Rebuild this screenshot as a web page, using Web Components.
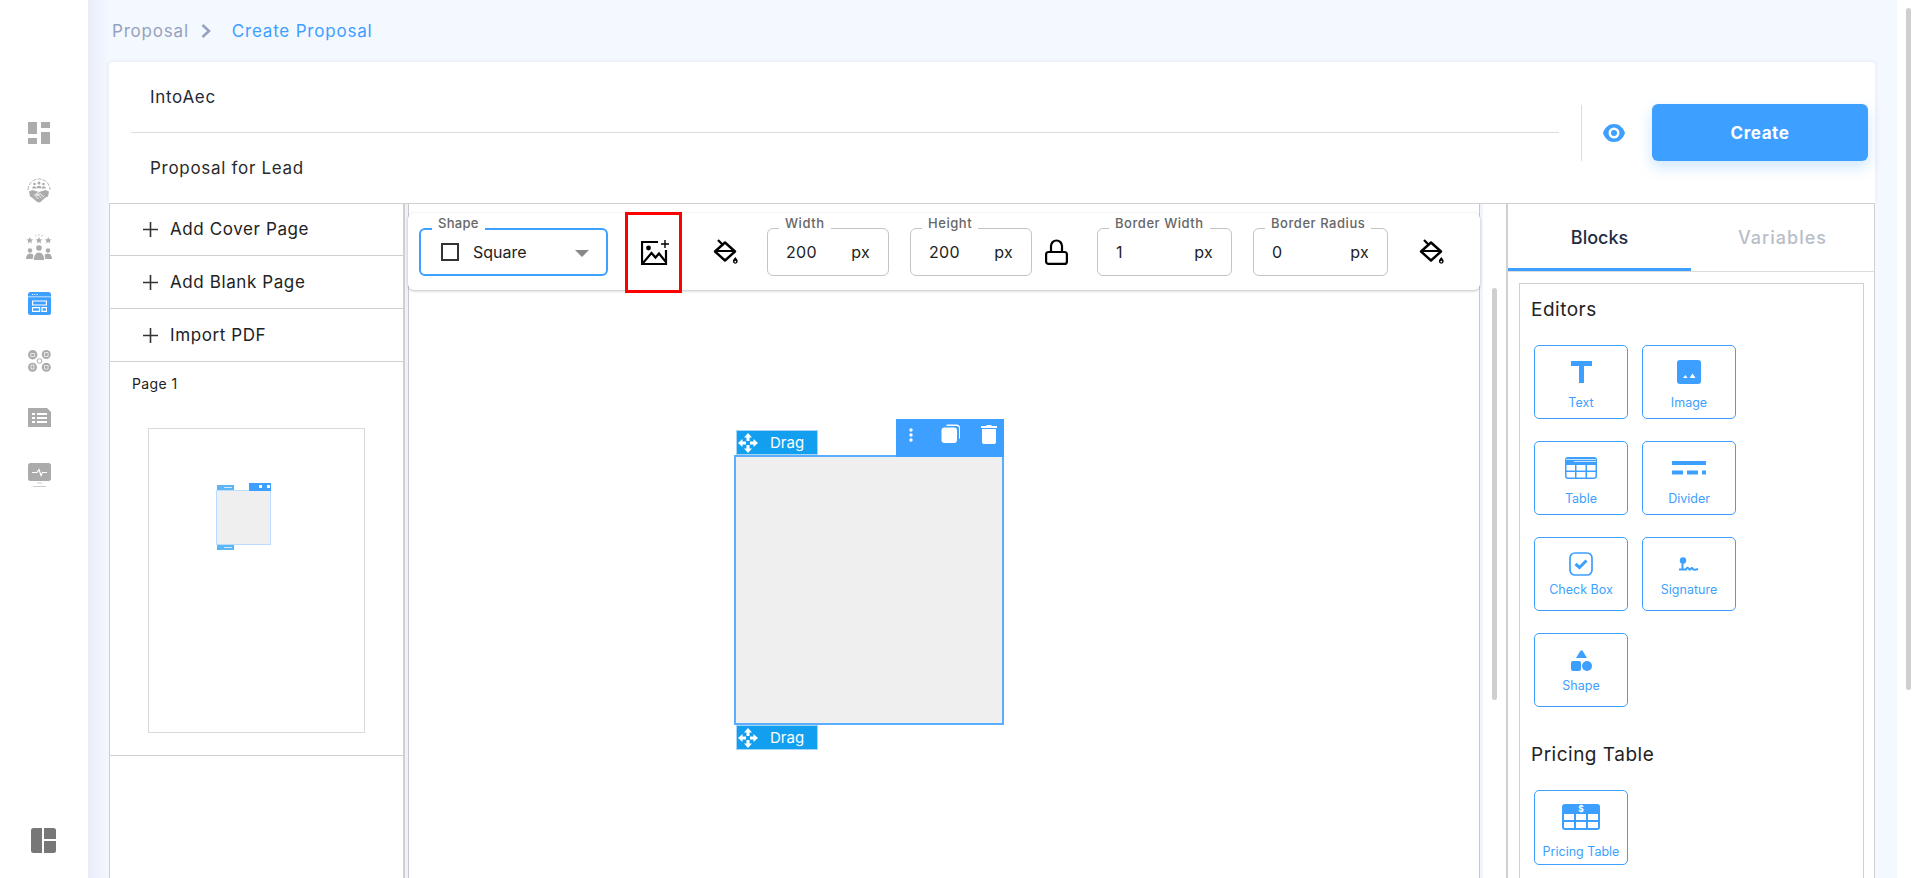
<!DOCTYPE html>
<html>
<head>
<meta charset="utf-8">
<title>Create Proposal</title>
<style>
  html, body { margin: 0; height: 100%; overflow: hidden; }
  body { font-family: Inter, "Open Sans", "Liberation Sans", sans-serif; color: #1f2937; background: #fff; }
</style>
</head>
<body>
<app-shell>
  <side-nav slot="nav"></side-nav>
  <bread-crumbs slot="crumbs"></bread-crumbs>
  <proposal-header slot="header"></proposal-header>
  <page-list slot="pages"></page-list>
  <shape-toolbar slot="toolbar"></shape-toolbar>
  <design-canvas slot="canvas"></design-canvas>
  <blocks-panel slot="blocks"></blocks-panel>
</app-shell>

<script>
const BLUE = '#3d9fff'

/** make a component class out of a template string */
const define = (name, html) => {
  const template = document.createElement('template')
  template.innerHTML = html
  customElements.define(name, class extends HTMLElement {
    constructor() {
      super()
      this.attachShadow({ mode: 'open' }).appendChild(template.content.cloneNode(true))
    }
  })
}

define('app-shell', `
  <style>
    :host { display: grid; grid-template-columns: 88px 1fr; width: 1920px; height: 878px; overflow: hidden; }
    .main { background: linear-gradient(90deg, #e8edf9 0, #f4f8ff 22px); display: flex; flex-direction: column; padding: 0 22px 0 21px; min-width: 0; position: relative; margin-right: 23px; }
    .crumbs { height: 62px; flex: none; }
    .work { flex: 1; display: grid; grid-template-columns: 296px 1fr 369px; background: #fff; border-top: 1px solid #d0d0d0; min-height: 0; }
    .pages { border-left: 1px solid #d0d0d0; border-right: 2px solid #d0d0d0; margin-top: -1px; min-width: 0; }
    .middle { padding-left: 3px; min-width: 0; min-height: 0; background: linear-gradient(90deg, #eef2fb 3px, transparent 3px); }
    .stage { display: flex; flex-direction: column; width: 1072px; height: 100%; border-right: 3px solid #f1f5fd;
      background: linear-gradient(#c8c8c8, #c8c8c8) left top / 1px 100% no-repeat, linear-gradient(#c8c8c8, #c8c8c8) right top / 1px 100% no-repeat; }
    .right { border-left: 2px solid #d0d0d0; border-right: 1px solid #d0d0d0; min-width: 0; }
    .scroll { position: absolute; left: 1818px; top: 8px; width: 5px; height: 682px; background: #cfcfcf; border-radius: 3px; }
  </style>
  <slot name="nav"></slot>
  <div class="main">
    <div class="crumbs"><slot name="crumbs"></slot></div>
    <slot name="header"></slot>
    <div class="work">
      <div class="pages"><slot name="pages"></slot></div>
      <div class="middle"><div class="stage"><slot name="toolbar"></slot><slot name="canvas"></slot></div></div>
      <div class="right"><slot name="blocks"></slot></div>
    </div>
    <div class="scroll"></div>
  </div>
`)

define('nav-item', `
  <style>
    :host { display: flex; justify-content: center; align-items: center; height: 57px; color: #ababab; padding-right: 10px; }
  </style>
  <slot></slot>
`)

const star = (cx, cy, r) => {
  const pts = []
  for (let i = 0; i < 10; i++) {
    const a = -Math.PI / 2 + i * Math.PI / 5
    const d = i % 2 ? r * 0.45 : r
    pts.push((cx + d * Math.cos(a)).toFixed(2) + ',' + (cy + d * Math.sin(a)).toFixed(2))
  }
  return `<polygon points="${pts.join(' ')}"/>`
}

define('side-nav', `
  <style>
    :host { display: flex; flex-direction: column; background: #fff; height: 878px; padding-top: 104px; box-sizing: border-box; }
    .foot { margin-top: auto; margin-bottom: 25px; display: flex; justify-content: center; margin-left: -1px; }
    svg { display: block; fill: currentColor; }
  </style>
  <nav-item>
    <svg width="22" height="22" viewBox="0 0 22 22"><path d="M0 0h9v12H0zM13 0h9v6h-9zM13 10h9v12h-9zM0 16h9v6H0z"/></svg>
  </nav-item>
  <nav-item>
    <svg width="24" height="26" viewBox="0 0 24 26">
      <path d="M1 13A11 11 0 0 1 23 13" fill="none" stroke="currentColor" stroke-width=".9" stroke-dasharray="4 1.200"/>
      <circle cx="12" cy="6" r="1.500"/><circle cx="7.500" cy="7" r="1.300"/><circle cx="16.500" cy="7" r="1.300"/>
      <path d="M9.500 11.200c0-3.200 5-3.200 5 0zM5.200 11.400c0-2.900 4-2.900 4 0zM14.800 11.400c0-2.900 4-2.900 4 0z"/>
      <path d="M2 14.500l3.500-1.500 6.500 2 6.500-2 3.500 1.500-1 5-2.500 1-5 4.500-2 .5-2-1-4.500-4-2-1z"/>
      <path d="M7 17.500l4.500 4.500M9.500 16.500l5 4.500M12 15l-3.500 2.500 2 1 2.500-2 4 3.500" stroke="#fff" stroke-width=".9" fill="none"/>
    </svg>
  </nav-item>
  <nav-item>
    <svg width="26" height="26" viewBox="0 0 26 26">
      ${star(3.800, 6.500, 3.600)}${star(13, 6.500, 3.600)}${star(22.200, 6.500, 3.600)}
      <path d="M13 0v1.500M9.500 1l.8 1.300M16.500 1l-.8 1.300" stroke="currentColor" stroke-width=".8"/>
      <circle cx="13" cy="14" r="2.800"/><path d="M7.800 26c0-10 10.400-10 10.400 0z"/>
      <circle cx="4" cy="16.500" r="2.200"/><circle cx="22" cy="16.500" r="2.200"/>
      <path d="M0 25c0-6.500 6.200-6.500 7.400-3.500L6.700 25zM26 25c0-6.500-6.200-6.500-7.400-3.500l.7 3.500z"/>
    </svg>
  </nav-item>
  <nav-item style="color:${BLUE}">
    <svg width="23" height="23" viewBox="0 0 23 23"><rect width="23" height="23" rx="2.500"/>
      <path d="M0 4.800h23" stroke="#fff" stroke-width=".7"/>
      <path fill="#fff" d="M4 2h1v1H4zM6.300 2h1v1h-1zM8.600 2h1v1h-1z"/>
      <path fill="none" stroke="#fff" stroke-width="1.200" d="M4.600 9h13.800v4H4.600zM4.600 15.600h7v3.800h-7zM14 15.600h4.400v3.800H14z"/>
    </svg>
  </nav-item>
  <nav-item>
    <svg width="23" height="22" viewBox="0 0 23 22">
      <circle cx="4.700" cy="4.800" r="4.700"/><circle cx="18.300" cy="4.500" r="4.500"/><circle cx="4.500" cy="17.300" r="4.500"/><circle cx="18.300" cy="17.300" r="4.500"/>
      <circle cx="11.500" cy="11" r="2.300" fill="#fff" stroke="currentColor"/>
      <path d="M2.800 3.500h3.800v3H2.800zM16.500 2.500h3.600v4h-3.600zM3 15h3v4H3zM16.500 15.500h3.600v3.600h-3.600z" fill="none" stroke="#fff" stroke-width=".7"/>
    </svg>
  </nav-item>
  <nav-item>
    <svg width="23" height="19" viewBox="0 0 23 19"><path d="M0 0h19l4 4v15H0z"/><path d="M4 5h3v2H4zM9 5h10v2H9zM4 9h3v2H4zM9 9h10v2H9zM4 13h3v2H4zM9 13h10v2H9z" fill="#fff"/></svg>
  </nav-item>
  <nav-item>
    <svg width="23" height="24" viewBox="0 0 23 24"><rect width="23" height="18" rx="2.500"/><path d="M5 23h13v1H5z" opacity=".6"/><path d="M9 19h5v2H9z" opacity=".3"/><path d="M4 9.500h5l2-3 2 6 1.500-3H19" fill="none" stroke="#fff" stroke-width="1.200"/></svg>
  </nav-item>
  <div class="foot" style="color:#777">
    <svg width="25" height="25" viewBox="0 0 25 25"><path d="M2.500 0H11v25H2.500A2.500 2.500 0 0 1 0 22.500v-20A2.500 2.500 0 0 1 2.500 0zM13 0h9.500A2.500 2.500 0 0 1 25 2.500V11H13zM13 13h12v9.500a2.500 2.500 0 0 1-2.500 2.500H13z"/></svg>
  </div>
`)

define('bread-crumbs', `
  <style>
    :host { display: flex; align-items: center; height: 62px; padding-left: 3px; font-size: 17px; letter-spacing: .8px; color: #94a3bd; }
    svg { margin: 0 21px 0 12px; }
    b { font-weight: 400; color: ${BLUE}; }
  </style>
  <span>Proposal</span>
  <svg width="10" height="14" viewBox="0 0 10 14"><path d="M1.500 1L8 7l-6.500 6" fill="none" stroke="#94a3bd" stroke-width="2.500"/></svg>
  <b>Create Proposal</b>
`)

define('proposal-header', `
  <style>
    :host { display: flex; height: 141px; background: #fff; border-radius: 4px 4px 0 0; box-shadow: 0 0 4px rgba(120,140,180,.15); align-items: center; flex: none; }
    .names { flex: none; width: 1428px; margin-left: 22px; }
    .names div { height: 70px; display: flex; align-items: center; padding-left: 19px; font-size: 17px; letter-spacing: .7px; box-sizing: border-box; color: #2a2a2a; }
    .names div:first-child { border-bottom: 1px solid #dcdcdc; color: #1f2937; }
    .sep { width: 1px; height: 56px; background: #dcdcdc; margin-left: 22px; }
    svg { margin: 0 26px 0 20px; display: block; }
    button { width: 216px; height: 57px; border: 0; border-radius: 6px; background: ${BLUE}; color: #fff; font: 700 17px Inter, "Open Sans", sans-serif; letter-spacing: .6px; box-shadow: 0 6px 14px rgba(61,159,255,.25); }
  </style>
  <div class="names"><div>IntoAec</div><div>Proposal for Lead</div></div>
  <div class="sep"></div>
  <svg width="24" height="24" viewBox="0 0 24 24"><path fill="${BLUE}" d="M12 3C7 3 2.700 6.400 1 12c1.700 5.600 6 9 11 9s9.300-3.400 11-9c-1.700-5.600-6-9-11-9zM12 17.500a5.500 5.500 0 1 1 0-11 5.500 5.500 0 0 1 0 11zm0-8.500a3 3 0 1 0 0 6 3 3 0 0 0 0-6z"/></svg>
  <button>Create</button>
`)

define('page-action', `
  <style>
    :host { display: flex; align-items: center; height: 52px; border-bottom: 1px solid #d0d0d0; padding-left: 33px; font-size: 17px; letter-spacing: .6px; color: #222; }
    svg { margin-right: 12px; }
  </style>
  <svg width="15" height="15" viewBox="0 0 15 15"><path d="M7.500 0v15M0 7.500h15" stroke="#333" stroke-width="1.600"/></svg>
  <slot></slot>
`)

define('mini-block', `
  <style>
    :host { display: block; position: absolute; left: 67px; top: 61px; width: 55px; height: 55px; box-sizing: border-box; background: #efefef; border: 1px solid #b9dcff; }
    .d { position: absolute; left: 0; width: 17px; height: 5px; background: #5cb5f5; border: 0; }
    .d::after { content: ""; position: absolute; left: 7px; top: 2px; width: 8px; height: 1px; background: #cfe8fb; }
    .t { position: absolute; right: -1px; top: -8px; width: 22px; height: 8px; background: ${BLUE}; }
    .t i { position: absolute; top: 2px; width: 3px; height: 3px; background: #fff; }
  </style>
  <div class="d" style="top:-6px"></div>
  <div class="t"><i style="left:10px"></i><i style="left:18px"></i></div>
  <div class="d" style="bottom:-6px"></div>
`)

define('page-list', `
  <style>
    :host { display: block; height: 100%; }
    .page { height: 394px; border-bottom: 1px solid #d0d0d0; box-sizing: border-box; position: relative; }
    h4 { margin: 0; font: 400 14px Inter, "Open Sans", sans-serif; letter-spacing: .4px; position: absolute; left: 22px; top: 13px; color: #222; }
    .thumb { position: absolute; left: 38px; top: 66px; width: 217px; height: 305px; border: 1px solid #dadada; box-sizing: border-box; }
  </style>
  <page-action>Add Cover Page</page-action>
  <page-action>Add Blank Page</page-action>
  <page-action>Import PDF</page-action>
  <div class="page">
    <h4>Page 1</h4>
    <div class="thumb"><mini-block></mini-block></div>
  </div>
`)

define('num-field', `
  <style>
    :host { display: block; position: relative; height: 48px; box-sizing: border-box; border: 1px solid #c4c4c4; border-radius: 6px; font-size: 16px; letter-spacing: .3px; color: #222; flex: none; }
    label { position: absolute; left: 11px; top: -14px; padding: 0 6px; background: #fff; font-size: 13px; letter-spacing: .55px; font-weight: 500; color: #666; white-space: nowrap; line-height: 16px; }
    .v { position: absolute; left: 18px; top: 13px; line-height: 20px; }
    .u { position: absolute; right: 18px; top: 13px; line-height: 20px; }
  </style>
  <label><slot name="label"></slot></label>
  <span class="v"><slot></slot></span>
  <span class="u">px</span>
`)

const BUCKET = `<svg width="26" height="26" viewBox="0 0 26 26"><path d="M5 1l5.500 5.500" fill="none" stroke="#000" stroke-width="2.200"/><path d="M12 3.500L22 12.500 12 21.500 2 12.500z" fill="#fff" stroke="#000" stroke-width="2.400" stroke-linejoin="round"/><path d="M3 12h18" stroke="#000" stroke-width="2"/><path d="M22.300 18c1.300 1.800 2.400 2.900 2.400 4.300a2.400 2.400 0 0 1-4.800 0c0-1.400 1.100-2.500 2.400-4.300z"/><circle cx="22.300" cy="22.600" r=".9" fill="#fff"/></svg>`

define('shape-toolbar', `
  <style>
    :host { display: flex; align-items: center; height: 77px; margin-top: 9px; background: #fff; border-radius: 6px; box-shadow: 0 1px 3px rgba(0,0,0,.25); box-sizing: border-box; flex: none; position: relative; z-index: 1; width: 1072px; }
    .select { position: relative; width: 189px; height: 48px; margin-left: 11px; box-sizing: border-box; border: 2px solid ${BLUE}; border-radius: 6px; display: flex; align-items: center; padding-left: 20px; font-size: 16px; color: #222; flex: none; }
    .select label { position: absolute; left: 11px; top: -15px; background: #fff; padding: 0 6px; font-size: 13px; letter-spacing: .3px; font-weight: 500; color: #666; line-height: 16px; }
    .box { width: 14px; height: 14px; border: 2px solid #333; margin-right: 14px; }
    .caret { position: absolute; right: 17px; top: 20px; border: 7px solid transparent; border-top: 7px solid #888; border-bottom: 0; }
    .img { width: 57px; height: 81px; margin: 1px 0 -1px 17px; box-sizing: border-box; border: 3px solid #f00; display: flex; align-items: center; justify-content: center; flex: none; }
    .img svg { margin-left: 3px; }
    svg { display: block; flex: none; }
  </style>
  <div class="select">
    <label>Shape</label>
    <span class="box"></span>Square<span class="caret"></span>
  </div>
  <div class="img">
    <svg width="28" height="25" viewBox="0 0 28 25"><path d="M17 2H1v22h24V10" fill="none" stroke="#000" stroke-width="2.200"/><circle cx="7.500" cy="8" r="2.400"/><path d="M2 23l8.500-10 4 4.500 3.500-4 6.500 8" fill="none" stroke="#000" stroke-width="2.200"/><path d="M24 0v8M20 4h8" stroke="#000" stroke-width="1.400"/></svg>
  </div>
  <div style="margin-left:31px">${BUCKET}</div>
  <num-field style="width:122px;margin-left:28px"><span slot="label">Width</span>200</num-field>
  <num-field style="width:122px;margin-left:21px"><span slot="label">Height</span>200</num-field>
  <svg style="margin-left:13px" width="23" height="26" viewBox="0 0 23 26"><path d="M6 13V7a5.500 5.500 0 0 1 11 0V13" fill="none" stroke="#000" stroke-width="2.200"/><rect x="1.100" y="13" width="20.800" height="11.900" rx="2.500" fill="none" stroke="#000" stroke-width="2.200"/></svg>
  <num-field style="width:135px;margin-left:29px"><span slot="label">Border Width</span>1</num-field>
  <num-field style="width:135px;margin-left:21px"><span slot="label">Border Radius</span>0</num-field>
  <div style="margin-left:31px">${BUCKET}</div>
`)

define('drag-tab', `
  <style>
    :host { display: flex; align-items: center; position: absolute; left: 0; width: 82px; height: 25px; box-sizing: border-box; background: #139fef; border: 1px solid #a8d4f5; color: #fff; font-size: 15px; padding-left: 1px; }
    svg { margin-right: 12px; flex: none; }
  </style>
  <svg width="20" height="20" viewBox="0 0 20 20" fill="#fff"><path d="M10 0l4 4.500h-2.500V8h-3V4.500H6zM10 20l4-4.500h-2.500V12h-3v3.500H6zM0 10l4.500-4v2.500H8v3H4.500V14zM20 10l-4.500-4v2.500H12v3h3.500V14z"/></svg>
  <span>Drag</span>
`)

define('design-canvas', `
  <style>
    :host { display: block; flex: 1; position: relative; min-height: 0; }
    .block { position: absolute; left: 326px; top: 165px; width: 270px; height: 270px; box-sizing: border-box; background: #efefef; border: 2px solid #5aaeff; }
    .tools { position: absolute; right: -2px; top: -38px; width: 108px; height: 38px; background: ${BLUE}; }
    .tools svg { display: block; position: absolute; }
    .rail { position: absolute; left: 1084px; top: -2px; width: 5px; height: 412px; background: #cfcfcf; border-radius: 3px; }
  </style>
  <div class="block">
    <drag-tab style="top:-27px"></drag-tab>
    <div class="tools">
      <svg style="left:11px;top:9px" width="8" height="14" viewBox="0 0 8 14" fill="#fff"><circle cx="4" cy="2" r="1.700"/><circle cx="4" cy="7" r="1.700"/><circle cx="4" cy="12" r="1.700"/></svg>
      <svg style="left:45px;top:5px" width="20" height="20" viewBox="0 0 20 20" fill="#fff"><path d="M5 1.500A1.500 1.500 0 0 1 6.500 0.500h9A3.500 3.500 0 0 1 19 4v9.500a1.500 1.500 0 0 1-1 1.400V4.500A2.500 2.500 0 0 0 15.500 2H6.500A1.500 1.500 0 0 0 5 1.500z"/><rect x="0.500" y="3.500" width="15.500" height="15.500" rx="3"/></svg>
      <svg style="left:85px;top:5px" width="16" height="20" viewBox="0 0 16 20" fill="#fff"><path d="M0 2h5l1-1h4l1 1h5v2H0zM1 5h14v13a2 2 0 0 1-2 2H3a2 2 0 0 1-2-2z"/></svg>
    </div>
    <drag-tab style="bottom:-27px"></drag-tab>
  </div>
  <div class="rail"></div>
`)

define('block-tile', `
  <style>
    :host { display: flex; flex-direction: column; align-items: center; box-sizing: border-box; width: 94px; height: 74px; border: 1px solid ${BLUE}; border-radius: 5px; color: ${BLUE}; font-size: 12.500px; line-height: 16px; white-space: nowrap; }
    .ic { height: 34px; margin-top: 9px; display: flex; align-items: center; justify-content: center; flex: none; }
    .lb { margin-top: var(--gap, 6px); }
    ::slotted(svg) { display: block; }
  </style>
  <div class="ic"><slot name="icon"></slot></div>
  <div class="lb"><slot></slot></div>
`)

define('blocks-panel', `
  <style>
    :host { display: block; height: 100%; }
    .tabs { display: grid; grid-template-columns: 1fr 1fr; height: 68px; border-bottom: 1px solid #dcdcdc; font-size: 18px; font-weight: 500; box-sizing: border-box; }
    .tabs div { display: flex; align-items: center; justify-content: center; color: #1f2b41; box-sizing: border-box; }
    .tabs div.on { border-bottom: 3px solid ${BLUE}; padding-top: 2px; }
    .tabs div + div { color: #b8bec8; letter-spacing: 1px; padding-bottom: 1px; }
    .wrap { margin: 11px 10px 0 11px; border: 1px solid #d0d0d0; border-bottom: 0; height: 600px; padding: 13px 13px 0 11px; }
    h3 { margin: 0 0 22px 0; font-size: 19px; letter-spacing: .5px; font-weight: 400; color: #222; line-height: 26px; }
    .grid { display: grid; grid-template-columns: 94px 94px; column-gap: 14px; row-gap: 22px; padding-left: 3px; margin-bottom: 35px; }
  </style>
  <div class="tabs"><div class="on">Blocks</div><div>Variables</div></div>
  <div class="wrap">
    <h3>Editors</h3>
    <div class="grid">
      <block-tile style="--gap:6px"><svg slot="icon" width="21" height="22" viewBox="0 0 21 22" fill="${BLUE}"><path d="M0 0h21v5h-8v17H8V5H0z"/></svg>Text</block-tile>
      <block-tile style="--gap:6px"><svg slot="icon" width="24" height="24" viewBox="0 0 24 24"><rect width="24" height="24" rx="3" fill="${BLUE}"/><path d="M6 18l2.300-3 2.300 3zM12.500 18l3-4.500 3 4.500z" fill="#fff"/></svg>Image</block-tile>
      <block-tile style="--gap:6px"><svg slot="icon" width="32" height="22" viewBox="0 0 32 22"><rect width="32" height="22" rx="3" fill="${BLUE}"/><path d="M1 2.500h30M9 4.500h22" stroke="#fff" stroke-width=".7"/><path d="M1.500 8h8.500v5.500H1.500zM11.500 8h9v5.500h-9zM22 8h8.500v5.500H22zM1.500 15h8.500v5.500H3a1.500 1.500 0 0 1-1.500-1.500zM11.500 15h9v5.500h-9zM22 15h8.500v4a1.500 1.500 0 0 1-1.500 1.500h-7z" fill="#fff"/></svg>Table</block-tile>
      <block-tile style="--gap:6px"><svg slot="icon" width="34" height="14" viewBox="0 0 34 14" fill="${BLUE}"><path d="M0 0h34v4H0zM0 9.500h11v4H0zM15 9.500h11v4H15zM30 9.500h4v4h-4z"/></svg>Divider</block-tile>
      <block-tile style="--gap:1px"><svg slot="icon" width="24" height="24" viewBox="0 0 24 24"><rect x="1" y="1" width="22" height="22" rx="5" fill="none" stroke="${BLUE}" stroke-width="1.700"/><path d="M6.500 12l4 3.500 7-7" fill="none" stroke="${BLUE}" stroke-width="3"/></svg>Check Box</block-tile>
      <block-tile style="--gap:1px"><svg slot="icon" width="20" height="14" viewBox="0 0 20 14"><circle cx="4" cy="3.500" r="3.200" fill="${BLUE}"/><path d="M3.500 5v7M0 12.500h7c1-3.500 2.500-1 3.500 0s2-3 3-1 2 1.500 5.500 .5" fill="none" stroke="${BLUE}" stroke-width="2"/></svg>Signature</block-tile>
      <block-tile style="--gap:1px"><svg slot="icon" width="21" height="21" viewBox="0 0 21 21" fill="${BLUE}"><path d="M9.300 1a1.500 1.500 0 0 1 2.400 0l4.300 7H5z"/><rect x="0" y="11" width="10" height="10" rx="2"/><circle cx="16" cy="16" r="5"/></svg>Shape</block-tile>
    </div>
    <h3>Pricing Table</h3>
    <div class="grid">
      <block-tile style="--gap:10px;height:75px"><svg slot="icon" width="38" height="26" viewBox="0 0 38 26"><rect width="38" height="26" rx="3" fill="${BLUE}"/><text x="19" y="7.500" font-size="8.500" font-weight="700" text-anchor="middle" fill="#fff" font-family="Inter">$</text><path d="M2 10h10v6H2zM14 10h10v6H14zM26 10h10v6H26zM2 18h10v6H2zM14 18h10v6H14zM26 18h10v6H26z" fill="#fff"/></svg>Pricing Table</block-tile>
    </div>
  </div>
`)
</script>
</body>
</html>
